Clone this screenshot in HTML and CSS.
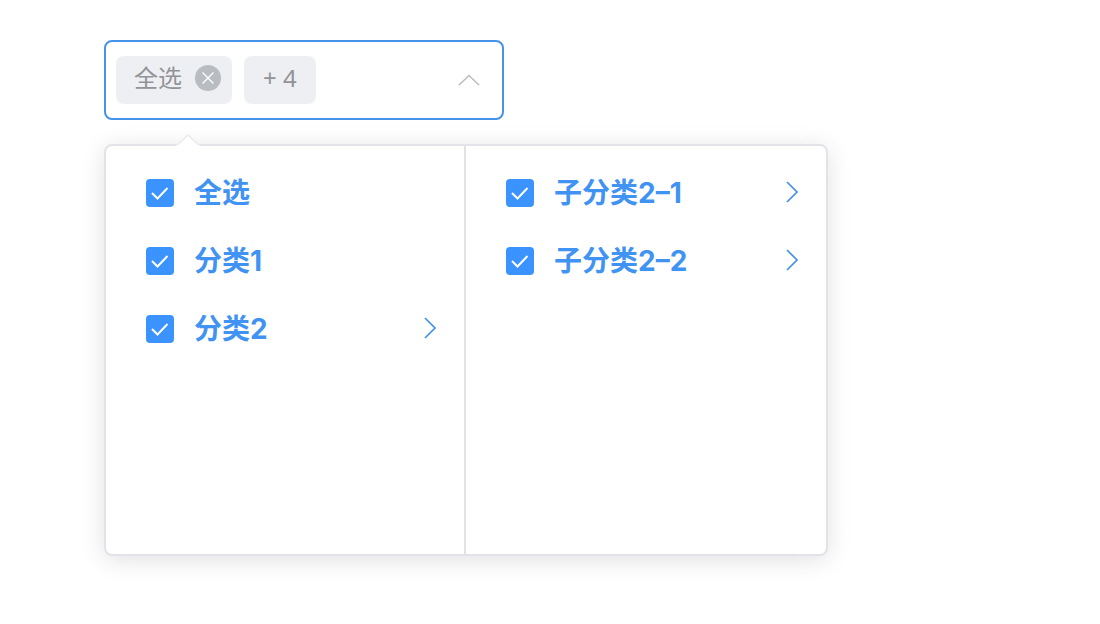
FILE: index.html
```html
<!DOCTYPE html>
<html lang="zh-CN">
<head>
<meta charset="utf-8">
<meta name="viewport" content="width=device-width, initial-scale=1">
<title>级联选择</title>
<link rel="stylesheet" href="styles.css">
</head>
<body>
<main class="cascader">
  <div class="field">
    <span class="tag">全选
      <button class="tag-close" type="button" aria-label="移除">
        <svg viewBox="0 0 26 26"><circle cx="13" cy="13" r="13"/><path d="M7.500 7.500l11 11M18.500 7.500l-11 11"/></svg>
      </button>
    </span>
    <span class="tag">+ 4</span>
    <button class="toggle" type="button" aria-label="收起">
      <svg viewBox="0 0 22 12"><path d="M1 11L11 1.500L21 11"/></svg>
    </button>
  </div>
  <div class="panel">
    <svg class="pointer" viewBox="0 0 24 12"><path class="pointer-fill" d="M0 12L2 10L12 0L22 10L24 12Z"/><path class="pointer-line" d="M2 10.500L12 1L22 10.500"/></svg>
    <ul class="menu">
      <li class="option"><label class="choice"><input class="check" type="checkbox" checked><span>全选</span></label></li>
      <li class="option"><label class="choice"><input class="check" type="checkbox" checked><span>分类1</span></label></li>
      <li class="option"><label class="choice"><input class="check" type="checkbox" checked><span>分类2</span></label><svg class="next" viewBox="0 0 12 22"><path d="M1 1L11 11L1 21"/></svg></li>
    </ul>
    <ul class="menu">
      <li class="option"><label class="choice"><input class="check" type="checkbox" checked><span>子分类2–1</span></label><svg class="next" viewBox="0 0 12 22"><path d="M1 1L11 11L1 21"/></svg></li>
      <li class="option"><label class="choice"><input class="check" type="checkbox" checked><span>子分类2–2</span></label><svg class="next" viewBox="0 0 12 22"><path d="M1 1L11 11L1 21"/></svg></li>
    </ul>
  </div>
</main>
</body>
</html>
```
FILE: styles.css
```css
* {
  box-sizing: border-box;
}

body {
  margin: 0;
  background: #fff;
  font-family: Inter, "Noto Sans CJK SC", sans-serif;
}

.cascader {
  max-width: 828px;
  padding: 40px 0 40px 104px;
}

.field {
  display: flex;
  align-items: center;
  gap: 12px;
  max-width: 400px;
  padding: 14px 22px 14px 10px;
  border: 2px solid #4592e6;
  border-radius: 8px;
}

.tag {
  display: flex;
  align-items: center;
  gap: 13px;
  height: 48px;
  padding: 0 11px 4px 18px;
  border-radius: 8px;
  background: #eeeff3;
  color: #919397;
  font-family: "Noto Sans", "Noto Sans CJK SC", sans-serif;
  font-size: 24px;
  line-height: 44px;
  white-space: nowrap;
}

.tag + .tag {
  padding-right: 19px;
  padding-left: 19px;
}

.tag-close,
.toggle {
  padding: 0;
  border: 0;
  background: none;
  cursor: pointer;
}

.tag-close {
  width: 26px;
  height: 26px;
}

.tag-close svg,
.toggle svg {
  display: block;
  width: 100%;
}

.tag-close circle {
  fill: #b9bcc1;
}

.tag-close path {
  fill: none;
  stroke: #fff;
  stroke-width: 1.4;
}

.toggle {
  width: 22px;
  margin-left: auto;
}

.toggle path {
  fill: none;
  stroke: #bbbdc3;
  stroke-width: 1.6;
}

.panel {
  position: relative;
  display: grid;
  grid-template-columns: 1fr 1fr;
  min-height: 412px;
  margin-top: 24px;
  border: 2px solid #e1e3e8;
  border-radius: 8px;
  background: #fff;
  box-shadow: 0 4px 24px rgba(0, 0, 0, 0.12);
}

.pointer {
  position: absolute;
  top: -12px;
  left: 70px;
  width: 24px;
  height: 12px;
}

.pointer-fill {
  fill: #fff;
}

.pointer-line {
  fill: none;
  stroke: #e8eaef;
  stroke-width: 1.4;
}

.menu {
  margin: 0;
  padding: 12px 0;
  list-style: none;
}

.menu:not(:last-child) {
  border-right: 2px solid #e1e3e8;
}

.option {
  display: flex;
  align-items: center;
  justify-content: space-between;
  height: 68px;
  padding: 0 28px 0 40px;
  color: #4093f2;
  font-size: 28px;
  font-weight: 700;
}

.choice {
  display: flex;
  align-items: center;
  gap: 20px;
  padding-top: 2px;
  line-height: 40px;
  white-space: nowrap;
}

.check {
  appearance: none;
  width: 28px;
  height: 28px;
  margin: 0;
  border-radius: 4px;
  background: #3a93ff;
}

.check:checked {
  background-image: url("data:image/svg+xml,%3Csvg xmlns='http://www.w3.org/2000/svg' viewBox='0 0 28 28'%3E%3Cpath d='M6 14L11.500 19.500L21.500 9' fill='none' stroke='white' stroke-width='2'/%3E%3C/svg%3E");
}

.next {
  width: 12px;
  height: 22px;
}

.next path {
  fill: none;
  stroke: #4592e6;
  stroke-width: 1.7;
}
```
